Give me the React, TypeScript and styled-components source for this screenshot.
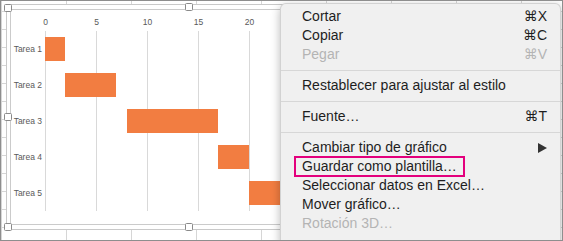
import styled, { createGlobalStyle } from "styled-components";

const GlobalStyle = createGlobalStyle`
  html, body {
    margin: 0;
    padding: 0;
    background: #ffffff;
  }
  * {
    box-sizing: border-box;
  }
`;

const UNIT = 10.2;

const Sheet = styled.div`
  position: relative;
  width: 563px;
  height: 241px;
  overflow: hidden;
  border: 1px solid #8e8e8e;
  padding: 3px 0 0 5px;
  background-color: #ffffff;
  background-image: linear-gradient(to right, #d6d6d6 1px, transparent 1px),
    linear-gradient(to bottom, #d6d6d6 1px, transparent 1px);
  background-size: 65px 18px;
  background-position: 65px 10px;
  font-family: "Liberation Sans", Arial, sans-serif;
`;

const ChartObject = styled.div`
  position: relative;
  width: 365px;
  height: 226px;
  border: 1px solid #c9c9c9;
  padding: 4px 4px 4px 3px;
  background: #ffffff;
`;

const ChartArea = styled.div`
  height: 100%;
  border: 1px solid #cbcbcb;
  background: #ffffff;
  color: #595959;
  font-size: 8.5px;
`;

const AxisRow = styled.div`
  display: grid;
  grid-template-columns: 34px 1fr;
  height: 21px;
  align-items: end;
  padding-bottom: 4px;
`;

const AxisTicks = styled.div`
  display: flex;
  margin-left: -25px;
`;

const Tick = styled.span`
  width: 51px;
  flex: none;
  text-align: center;
  line-height: 10px;
`;

const Row = styled.div`
  display: grid;
  grid-template-columns: 34px 1fr;
  height: 36px;
`;

const RowLabel = styled.span`
  align-self: center;
  text-align: right;
  padding-right: 3px;
  white-space: nowrap;
`;

const Track = styled.div`
  padding-top: 6px;
  background-image: repeating-linear-gradient(
    to right,
    #d9d9d9 0 1px,
    transparent 1px 51px
  );
`;

const Bar = styled.div`
  height: 24px;
  background: #f27d41;
`;

const Handle = styled.span<{ $x: number; $y: number }>`
  position: absolute;
  left: ${(p) => p.$x}px;
  top: ${(p) => p.$y}px;
  width: 8px;
  height: 8px;
  background: #ffffff;
  border: 1px solid #8a8a8a;
  border-radius: 1.5px;
`;

const Menu = styled.div`
  position: absolute;
  left: 279px;
  top: 2px;
  width: 281px;
  padding: 3px 0 12px;
  background: #f0f0f0;
  border: 1px solid rgba(0, 0, 0, 0.12);
  border-radius: 6px;
  box-shadow: 0 3px 10px rgba(0, 0, 0, 0.28);
  font-size: 14px;
  line-height: 19px;
`;

const Item = styled.div<{ $disabled?: boolean }>`
  display: flex;
  align-items: center;
  height: 19px;
  padding: 0 13px 0 21px;
  color: ${(p) => (p.$disabled ? "#b4b4b4" : "#1e1e1e")};
  white-space: nowrap;
`;

const Label = styled.span<{ $marked?: boolean }>`
  position: relative;
  &::before {
    content: "";
    display: ${(p) => (p.$marked ? "block" : "none")};
    position: absolute;
    left: -8px;
    right: -8px;
    top: -1px;
    bottom: -1px;
    border: 2px solid #e3007d;
  }
`;

const Shortcut = styled.span`
  margin-left: auto;
  font-family: "Liberation Sans", "DejaVu Sans", sans-serif;
`;

const Arrow = styled.svg`
  margin-left: auto;
  width: 9px;
  height: 10px;
  fill: #333333;
`;

const Separator = styled.div`
  height: 1px;
  margin: 6px 0 5px;
  background: #d7d7d7;
`;

interface ITask {
  name: string;
  start: number;
  length: number;
}

const tasks: ITask[] = [
  { name: "Tarea 1", start: 0, length: 2 },
  { name: "Tarea 2", start: 2, length: 5 },
  { name: "Tarea 3", start: 8, length: 9 },
  { name: "Tarea 4", start: 17, length: 3 },
  { name: "Tarea 5", start: 20, length: 5 },
];

const ticks = [0, 5, 10, 15, 20, 25, 30];

interface IMenuEntry {
  label?: string;
  shortcut?: string;
  disabled?: boolean;
  submenu?: boolean;
  marked?: boolean;
  separator?: boolean;
}

const menu: IMenuEntry[] = [
  { label: "Cortar", shortcut: "⌘X" },
  { label: "Copiar", shortcut: "⌘C" },
  { label: "Pegar", shortcut: "⌘V", disabled: true },
  { separator: true },
  { label: "Restablecer para ajustar al estilo" },
  { separator: true },
  { label: "Fuente…", shortcut: "⌘T" },
  { separator: true },
  { label: "Cambiar tipo de gráfico", submenu: true },
  { label: "Guardar como plantilla…", marked: true },
  { label: "Seleccionar datos en Excel…" },
  { label: "Mover gráfico…" },
  { label: "Rotación 3D…", disabled: true },
];

function App() {
  return (
    <>
      <GlobalStyle />
      <Sheet>
        <ChartObject>
          <ChartArea>
            <AxisRow>
              <span />
              <AxisTicks>
                {ticks.map((t) => (
                  <Tick key={t}>{t}</Tick>
                ))}
              </AxisTicks>
            </AxisRow>
            {tasks.map((task) => (
              <Row key={task.name}>
                <RowLabel>{task.name}</RowLabel>
                <Track>
                  <Bar
                    style={{
                      marginLeft: task.start * UNIT,
                      width: task.length * UNIT,
                    }}
                  />
                </Track>
              </Row>
            ))}
          </ChartArea>
          <Handle $x={-3} $y={-1} />
          <Handle $x={178} $y={-2} />
          <Handle $x={-3} $y={108} />
          <Handle $x={-3} $y={218} />
          <Handle $x={178} $y={218} />
        </ChartObject>
        <Menu>
          {menu.map((entry, i) =>
            entry.separator ? (
              <Separator key={i} />
            ) : (
              <Item key={i} $disabled={entry.disabled}>
                <Label $marked={entry.marked}>{entry.label}</Label>
                {entry.shortcut && <Shortcut>{entry.shortcut}</Shortcut>}
                {entry.submenu && (
                  <Arrow viewBox="0 0 9 10">
                    <polygon points="0,0 9,5 0,10" />
                  </Arrow>
                )}
              </Item>
            )
          )}
        </Menu>
      </Sheet>
    </>
  );
}

export default App;
